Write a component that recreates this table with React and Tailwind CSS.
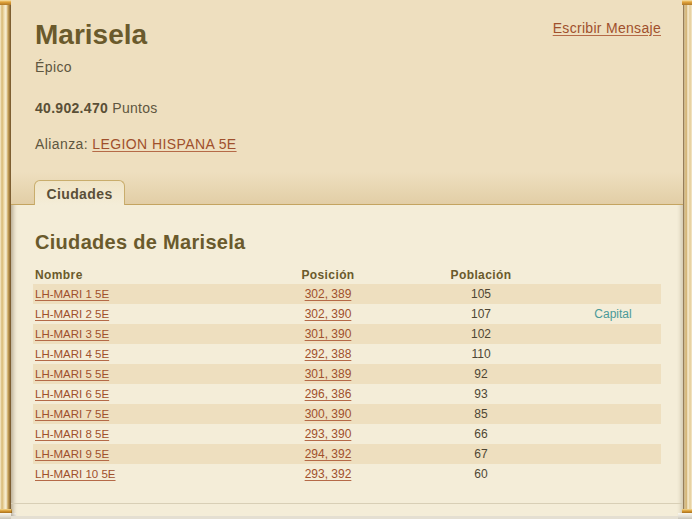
import React from "react";

const ciudades = [
  { nombre: "LH-MARI 1 5E", pos: "302, 389", pob: 105 },
  { nombre: "LH-MARI 2 5E", pos: "302, 390", pob: 107, capital: true },
  { nombre: "LH-MARI 3 5E", pos: "301, 390", pob: 102 },
  { nombre: "LH-MARI 4 5E", pos: "292, 388", pob: 110 },
  { nombre: "LH-MARI 5 5E", pos: "301, 389", pob: 92 },
  { nombre: "LH-MARI 6 5E", pos: "296, 386", pob: 93 },
  { nombre: "LH-MARI 7 5E", pos: "300, 390", pob: 85 },
  { nombre: "LH-MARI 8 5E", pos: "293, 390", pob: 66 },
  { nombre: "LH-MARI 9 5E", pos: "294, 392", pob: 67 },
  { nombre: "LH-MARI 10 5E", pos: "293, 392", pob: 60 },
];

const link = "text-[#a0502c] underline underline-offset-2 decoration-[#b56a48]";

function Pilar({ side }) {
  const left = side === "left";
  return (
    <div
      className={`relative h-full shrink-0 ${left ? "w-[11px]" : "w-[9px]"} ${
        left
          ? "bg-[linear-gradient(90deg,#f6ecd0_0px,#d8b874_2px,#efdcae_4px,#f8f0d8_6px,#caa45c_8px,#8e6a34_10px,#6e5430_11px)]"
          : "bg-[linear-gradient(90deg,#7a6040_0px,#e8d6a8_2px,#c9a45e_3px,#f6ecd2_5px,#e4cc96_7px,#f4e8cc_9px)]"
      }`}
    >
      {/* capitel */}
      <div
        className={`absolute top-0 h-[5px] ${left ? "left-0 w-[13px]" : "right-0 w-[10px]"} bg-[linear-gradient(180deg,#f8e6b0_0px,#e2a43a_2px,#b07828_5px)]`}
      />
      {/* base */}
      <div
        className={`absolute bottom-[6px] h-[4px] ${left ? "left-0 w-[12px]" : "right-0 w-[10px]"} bg-[linear-gradient(180deg,#f4d890_0px,#d89a30_2px,#a87020_4px)]`}
      />
      <div
        className={`absolute bottom-0 h-[6px] ${left ? "left-0 w-[16px]" : "right-0 w-[14px]"} bg-[linear-gradient(180deg,#fbf8f0_0px,#e6e2d8_3px,#c8c4b8_6px)]`}
      />
    </div>
  );
}

export default function App() {
  return (
    <div
      className="flex h-[519px] w-[692px] overflow-hidden bg-[#f4edd8] text-[#5e5640]"
      style={{ fontFamily: '"Liberation Sans", Arial, sans-serif' }}
    >
      <Pilar side="left" />

      <div className="relative flex min-w-0 flex-1 flex-col shadow-[inset_5px_0_4px_-3px_rgba(60,40,10,0.35),inset_-5px_0_4px_-3px_rgba(60,40,10,0.2)]">
        {/* Cabecera del jugador */}
        <div className="relative h-[204px] shrink-0 bg-[linear-gradient(180deg,#eedfbf_0px,#eedfbf_172px,#e2cea6_204px)] pl-[24px] pr-[22px]">
          <div className="flex items-start justify-between">
            <h1 className="pt-[21px] text-[28px] font-bold leading-[28px] text-[#6a5a2c]">Marisela</h1>
            <a href="#" className={`pt-[20px] text-[14px] leading-[16px] tracking-[0.3px] ${link}`}>
              Escribir Mensaje
            </a>
          </div>
          <p className="mt-[10px] text-[14px] leading-[16px] tracking-[0.4px]">Épico</p>
          <p className="mt-[25px] text-[14px] leading-[16px] tracking-[0.3px]">
            <span className="font-bold text-[#5a4f36]">40.902.470</span> Puntos
          </p>
          <p className="mt-[20px] text-[14px] leading-[16px] tracking-[0.4px]">
            Alianza:{" "}
            <a href="#" className={link}>
              LEGION HISPANA 5E
            </a>
          </p>

          {/* Pestañas */}
          <div className="absolute bottom-0 left-[23px] flex">
            <div className="-mb-px flex h-[25px] w-[91px] items-start justify-center rounded-t-[6px] border border-b-0 border-[#c9ad6c] bg-[linear-gradient(180deg,#f0e4c6,#f4edd8)] pt-[5px] text-[14px] font-bold leading-[16px] tracking-[0.4px] text-[#5a4f38]">
              Ciudades
            </div>
          </div>
        </div>
        <div className="h-px shrink-0 bg-[#c4a460]" />

        {/* Ciudades */}
        <div className="flex-1 px-[22px] pt-[25px]">
          <h2 className="pl-[2px] text-[20px] font-bold leading-[24px] tracking-[0.3px] text-[#6a5a2c]">
            Ciudades de Marisela
          </h2>

          <div className="mt-[14px] grid h-[16px] grid-cols-[226px_138px_168px_96px] text-[12px] font-bold leading-[14px] tracking-[0.4px] text-[#6a5a2c]">
            <span className="pl-[2px]">Nombre</span>
            <span className="text-center">Posición</span>
            <span className="text-center">Población</span>
            <span />
          </div>

          {ciudades.map((c, i) => (
            <div
              key={c.nombre}
              className={`grid h-[20px] grid-cols-[226px_138px_168px_96px] items-center text-[12px] leading-[20px] ${
                i % 2 === 0 ? "bg-[#eedfbf]" : ""
              }`}
            >
              <span className="pl-[2px] text-[11.5px]">
                <a href="#" className={link}>
                  {c.nombre}
                </a>
              </span>
              <span className="text-center">
                <a href="#" className={link}>
                  {c.pos}
                </a>
              </span>
              <span className="text-center text-[#4e4634]">{c.pob}</span>
              <span className="text-center text-[#4b9a98]">{c.capital ? "Capital" : ""}</span>
            </div>
          ))}
        </div>

        <div className="h-[13px] shrink-0 border-t border-[#d8cfb6]" />
        <div className="h-[3px] shrink-0 bg-[#e4dfd2]" />
      </div>

      <Pilar side="right" />
    </div>
  );
}
